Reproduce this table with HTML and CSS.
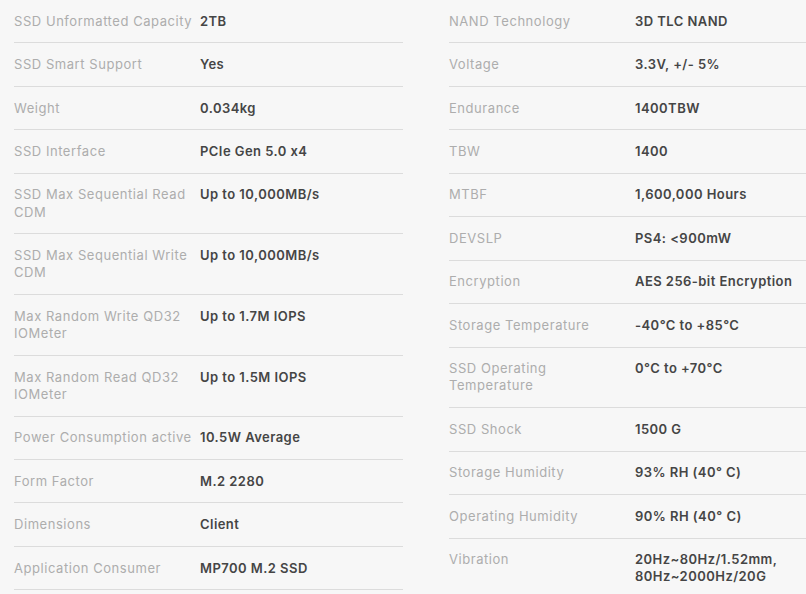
FILE: index.html
```html
<!DOCTYPE html>
<html lang="en">
<head>
<meta charset="utf-8">
<title>Specs</title>
<link rel="stylesheet" href="styles.css">
</head>
<body>
<div class="specs">
  <div class="col">
    <div class="row"><div class="label">SSD Unformatted Capacity</div><div class="value">2TB</div></div>
    <div class="row"><div class="label">SSD Smart Support</div><div class="value">Yes</div></div>
    <div class="row"><div class="label">Weight</div><div class="value">0.034kg</div></div>
    <div class="row"><div class="label">SSD Interface</div><div class="value">PCIe Gen 5.0 x4</div></div>
    <div class="row"><div class="label">SSD Max Sequential Read<br>CDM</div><div class="value">Up to 10,000MB/s</div></div>
    <div class="row"><div class="label">SSD Max Sequential Write<br>CDM</div><div class="value">Up to 10,000MB/s</div></div>
    <div class="row"><div class="label">Max Random Write QD32<br>IOMeter</div><div class="value">Up to 1.7M IOPS</div></div>
    <div class="row"><div class="label">Max Random Read QD32<br>IOMeter</div><div class="value">Up to 1.5M IOPS</div></div>
    <div class="row"><div class="label">Power Consumption active</div><div class="value">10.5W Average</div></div>
    <div class="row"><div class="label">Form Factor</div><div class="value">M.2 2280</div></div>
    <div class="row"><div class="label">Dimensions</div><div class="value">Client</div></div>
    <div class="row"><div class="label">Application Consumer</div><div class="value">MP700 M.2 SSD</div></div>
  </div>
  <div class="col">
    <div class="row"><div class="label">NAND Technology</div><div class="value">3D TLC NAND</div></div>
    <div class="row"><div class="label">Voltage</div><div class="value">3.3V, +/- 5%</div></div>
    <div class="row"><div class="label">Endurance</div><div class="value">1400TBW</div></div>
    <div class="row"><div class="label">TBW</div><div class="value">1400</div></div>
    <div class="row"><div class="label">MTBF</div><div class="value">1,600,000 Hours</div></div>
    <div class="row"><div class="label">DEVSLP</div><div class="value">PS4: &lt;900mW</div></div>
    <div class="row"><div class="label">Encryption</div><div class="value">AES 256-bit Encryption</div></div>
    <div class="row"><div class="label">Storage Temperature</div><div class="value">-40°C to +85°C</div></div>
    <div class="row"><div class="label">SSD Operating<br>Temperature</div><div class="value">0°C to +70°C</div></div>
    <div class="row"><div class="label">SSD Shock</div><div class="value">1500 G</div></div>
    <div class="row"><div class="label">Storage Humidity</div><div class="value">93% RH (40° C)</div></div>
    <div class="row"><div class="label">Operating Humidity</div><div class="value">90% RH (40° C)</div></div>
    <div class="row"><div class="label">Vibration</div><div class="value">20Hz~80Hz/1.52mm,<br>80Hz~2000Hz/20G</div></div>
  </div>
</div>
</body>
</html>
```
FILE: styles.css
```css
html, body {
  margin: 0;
  padding: 0;
  background: #f7f7f7;
  overflow: hidden;
}
body {
  width: 806px;
  height: 594px;
  font-family: Inter, "Helvetica Neue", "Liberation Sans", Arial, sans-serif;
  font-size: 13px;
  line-height: 17.25px;
}
.specs {
  display: grid;
  grid-template-columns: 389px 1fr;
  column-gap: 46px;
  padding-left: 14px;
}
.row {
  display: grid;
  grid-template-columns: 186px 1fr;
  padding: 12.7px 0 12.5px;
  border-bottom: 1px solid #dcdcdc;
}
.label {
  color: #adadad;
  letter-spacing: 0.55px;
  white-space: nowrap;
}
.value {
  color: #454545;
  font-weight: 600;
  letter-spacing: 0.45px;
  white-space: nowrap;
}
```
